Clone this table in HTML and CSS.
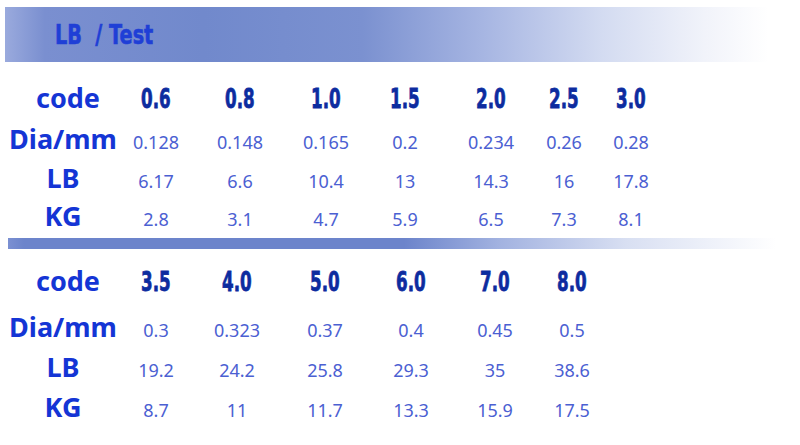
FILE: index.html
```html
<!DOCTYPE html>
<html>
<head>
<meta charset="utf-8">
<link rel="stylesheet" href="styles.css">
</head>
<body>
<div class="page">
  <div class="band"><span class="title">LB&nbsp; / Test</span></div>

  <div class="table t1">
    <div class="row r1">
      <div class="label lab-code">code</div>
      <div class="cell"><span class="code">0.6</span></div>
      <div class="cell"><span class="code">0.8</span></div>
      <div class="cell"><span class="code">1.0</span></div>
      <div class="cell"><span class="code">1.5</span></div>
      <div class="cell"><span class="code">2.0</span></div>
      <div class="cell"><span class="code">2.5</span></div>
      <div class="cell"><span class="code">3.0</span></div>
    </div>
    <div class="row r2">
      <div class="label">Dia/mm</div>
      <div class="cell val">0.128</div>
      <div class="cell val">0.148</div>
      <div class="cell val">0.165</div>
      <div class="cell val">0.2</div>
      <div class="cell val">0.234</div>
      <div class="cell val">0.26</div>
      <div class="cell val">0.28</div>
    </div>
    <div class="row r3">
      <div class="label">LB</div>
      <div class="cell val">6.17</div>
      <div class="cell val">6.6</div>
      <div class="cell val">10.4</div>
      <div class="cell val">13</div>
      <div class="cell val">14.3</div>
      <div class="cell val">16</div>
      <div class="cell val">17.8</div>
    </div>
    <div class="row r4">
      <div class="label">KG</div>
      <div class="cell val">2.8</div>
      <div class="cell val">3.1</div>
      <div class="cell val">4.7</div>
      <div class="cell val">5.9</div>
      <div class="cell val">6.5</div>
      <div class="cell val">7.3</div>
      <div class="cell val">8.1</div>
    </div>
  </div>

  <div class="sep"></div>

  <div class="table t2">
    <div class="row r1">
      <div class="label lab-code">code</div>
      <div class="cell"><span class="code">3.5</span></div>
      <div class="cell"><span class="code">4.0</span></div>
      <div class="cell"><span class="code">5.0</span></div>
      <div class="cell"><span class="code">6.0</span></div>
      <div class="cell"><span class="code">7.0</span></div>
      <div class="cell"><span class="code">8.0</span></div>
    </div>
    <div class="row r2">
      <div class="label">Dia/mm</div>
      <div class="cell val">0.3</div>
      <div class="cell val">0.323</div>
      <div class="cell val">0.37</div>
      <div class="cell val">0.4</div>
      <div class="cell val">0.45</div>
      <div class="cell val">0.5</div>
    </div>
    <div class="row r3">
      <div class="label">LB</div>
      <div class="cell val">19.2</div>
      <div class="cell val">24.2</div>
      <div class="cell val">25.8</div>
      <div class="cell val">29.3</div>
      <div class="cell val">35</div>
      <div class="cell val">38.6</div>
    </div>
    <div class="row r4">
      <div class="label">KG</div>
      <div class="cell val">8.7</div>
      <div class="cell val">11</div>
      <div class="cell val">11.7</div>
      <div class="cell val">13.3</div>
      <div class="cell val">15.9</div>
      <div class="cell val">17.5</div>
    </div>
  </div>
</div>
</body>
</html>
```

FILE: styles.css
```css
html, body {
  margin: 0;
  padding: 0;
  background: #ffffff;
}

.page {
  width: 800px;
  height: 445px;
  overflow: hidden;
  position: relative;
}

.band {
  margin: 7px 0 0 5px;
  height: 55px;
  display: flex;
  align-items: center;
  background: linear-gradient(to right, #9aaadd 0%, #7a8fd0 5%, #7189cc 25%, #7b91d0 45%, #a6b5e2 60%, #d3dbf1 75%, #f1f3fa 88%, #ffffff 96%);
}

.title {
  display: inline-block;
  margin-left: 50px;
  margin-top: 1px;
  font-family: "DejaVu Sans", sans-serif;
  font-weight: bold;
  font-size: 26px;
  color: #1f3fd6;
  -webkit-text-stroke: 0.6px #1f3fd6;
  transform: scaleX(0.74);
  transform-origin: left center;
  white-space: nowrap;
}

.table {
  display: flex;
  flex-direction: column;
}

.t1 { margin-top: 21px; }
.t2 { margin-top: 17px; }

.row {
  display: grid;
  align-items: baseline;
}

.t1 .row { grid-template-columns: 126px 84px 86px 79px 86px 73px 67px 60px; }
.t2 .row { grid-template-columns: 126px 81px 88px 86px 84px 77px 60px; }

.t1 .r1 { height: 41px; }
.t1 .r2 { height: 39px; }
.t1 .r3 { height: 38px; }
.t1 .r4 { height: 37px; }

.t2 .r1 { height: 46px; }
.t2 .r2 { height: 40px; }
.t2 .r3 { height: 40px; }
.t2 .r4 { height: 39px; }

.label {
  font-family: "Noto Sans", sans-serif;
  font-weight: bold;
  font-size: 27px;
  line-height: 30px;
  color: #1435d5;
  text-align: center;
}

.lab-code { padding-left: 10px; }

.cell {
  width: 60px;
  text-align: center;
  line-height: 30px;
}

.val {
  font-family: "Noto Sans", sans-serif;
  font-size: 18px;
  color: #4b60d2;
}

.code {
  display: inline-block;
  font-family: "DejaVu Sans", sans-serif;
  font-weight: bold;
  font-size: 27px;
  color: #0d2c9f;
  -webkit-text-stroke: 0.8px #0d2c9f;
  transform: scaleX(0.62);
}

.sep {
  margin-left: 8px;
  height: 11px;
  background: linear-gradient(to right, #7b90d2 0%, #6c84cb 2%, #6c84cb 50%, #a2b2e0 62%, #d8dff2 78%, #ffffff 97%);
}
```
